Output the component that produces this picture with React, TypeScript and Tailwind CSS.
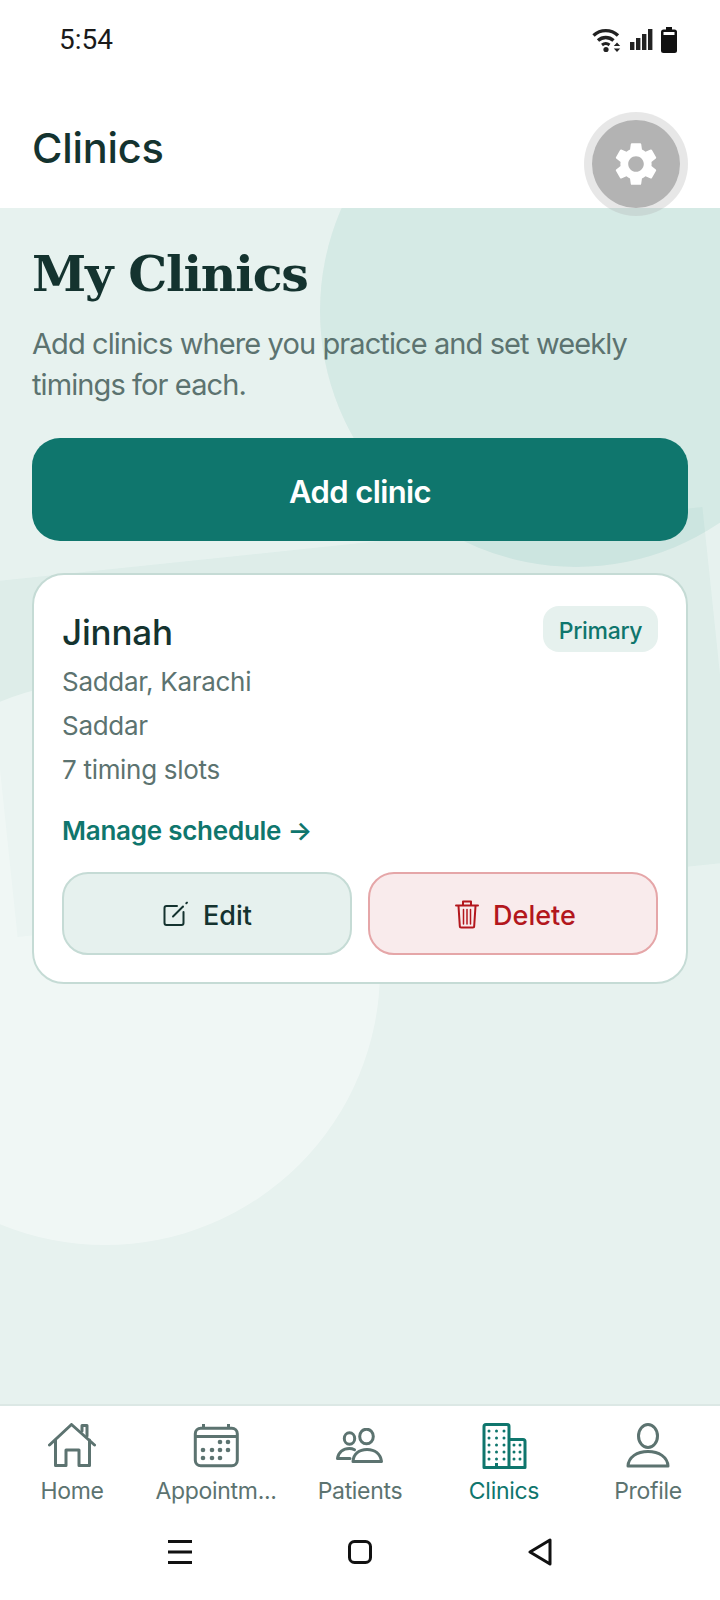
import { MdSettings } from "react-icons/md";

const sans = "font-['Inter','Noto_Sans',sans-serif]";

function WifiIcon() {
  return (
    <svg width="30" height="26" viewBox="0 0 30 26" fill="none" className="text-[#222]">
      <path d="M1.5 8.5C8.5 2 19 2 26 8.5" stroke="currentColor" strokeWidth="3.4" />
      <path d="M6 13.5C10.5 9.5 17 9.5 21.5 13.5" stroke="currentColor" strokeWidth="3.4" />
      <path d="M10 18C12.5 16 15 16 17.5 18" stroke="currentColor" strokeWidth="3" />
      <circle cx="14" cy="22.5" r="2.6" fill="currentColor" />
      <path d="M25 15.5l3.2 3.6h-6.4zM25 25l-3.2-3.6h6.4z" fill="currentColor" />
    </svg>
  );
}

function SignalIcon() {
  return (
    <svg width="23" height="22" viewBox="0 0 23 22" fill="#222">
      <rect x="0" y="13" width="4.4" height="8" />
      <rect x="6" y="9" width="4.4" height="12" />
      <rect x="12" y="5" width="4.4" height="16" />
      <rect x="18" y="0" width="4.4" height="21" />
    </svg>
  );
}

function BatteryIcon() {
  return (
    <svg width="16" height="26" viewBox="0 0 16 26">
      <rect x="5" y="0" width="6" height="3" fill="#111" />
      <rect x="0" y="2.5" width="16" height="23.5" rx="2.5" fill="#111" />
      <rect x="2.5" y="5" width="11" height="3" fill="#fff" />
    </svg>
  );
}

function HomeIcon() {
  return (
    <svg width="48" height="46" viewBox="48 1423 48 46" fill="none" stroke="currentColor" strokeWidth="3" strokeLinejoin="round" strokeLinecap="round">
      <path d="M49.5 1445L71.5 1424.5L94.5 1445" />
      <path d="M55.5 1440V1465.5H66V1450H79V1465.5H89.5V1440" />
      <path d="M82 1431V1425.5H87V1436" />
    </svg>
  );
}

function CalendarIcon() {
  const dots = [
    [220, 1442], [228, 1442],
    [203, 1450], [212, 1450], [220, 1450], [228, 1450],
    [203, 1458], [212, 1458], [220, 1458],
  ];
  return (
    <svg width="46" height="46" viewBox="193 1423 46 46" fill="none" stroke="currentColor" strokeWidth="3">
      <rect x="195.3" y="1428.3" width="42" height="37.5" rx="5.5" />
      <path d="M195.3 1436.5H237.3M203.5 1424V1428M228.5 1424V1428" />
      {dots.map(([x, y]) => (
        <circle key={`${x}-${y}`} cx={x} cy={y} r="2.3" fill="currentColor" stroke="none" />
      ))}
    </svg>
  );
}

function PatientsIcon() {
  return (
    <svg width="48" height="36" viewBox="337 1428 48 36" fill="none" stroke="currentColor" strokeWidth="3" strokeLinejoin="round" strokeLinecap="round">
      <ellipse cx="367.5" cy="1436.5" rx="6.8" ry="7.3" />
      <ellipse cx="350.5" cy="1438.5" rx="5.2" ry="5.8" />
      <path d="M354 1461.5C354.5 1454 360 1449.5 368 1449.5C376 1449.5 381.5 1454 382.5 1461.5Z" />
      <path d="M351 1458.5H338.5C339.5 1452.5 344 1448.5 350.5 1448.5C352.5 1448.5 354 1449 355.5 1449.8" />
    </svg>
  );
}

function ClinicsIcon() {
  const big: number[][] = [];
  for (const y of [1430, 1437, 1444, 1451, 1458]) {
    for (const x of [489, 496.5, 504]) big.push([x, y]);
  }
  const small: number[][] = [];
  for (const y of [1444, 1451, 1458]) {
    for (const x of [514, 520]) small.push([x, y]);
  }
  return (
    <svg width="46" height="48" viewBox="481 1421 46 48" fill="none" stroke="currentColor" strokeWidth="3" strokeLinejoin="round">
      <path d="M509 1466.5H484V1425.5A2 2 0 0 1 486 1423.5H507A2 2 0 0 1 509 1425.5V1466.5Z" />
      <path d="M509 1438.5H523A2 2 0 0 1 525 1440.5V1466.5H509" />
      <path d="M496.5 1466.5V1462" />
      {[...big, ...small].map(([x, y]) => (
        <circle key={`${x}-${y}`} cx={x} cy={y} r="1.5" fill="currentColor" stroke="none" />
      ))}
    </svg>
  );
}

function ProfileIcon() {
  return (
    <svg width="46" height="46" viewBox="624 1423 46 46" fill="none" stroke="currentColor" strokeWidth="3" strokeLinejoin="round">
      <ellipse cx="647" cy="1436" rx="9.5" ry="11.5" />
      <path d="M627 1466C627.5 1457 636 1451.5 647 1451.5C658 1451.5 666.5 1457 667 1466Z" />
    </svg>
  );
}

function EditIcon() {
  return (
    <svg width="28" height="28" viewBox="0 0 28 28" fill="none" stroke="currentColor" strokeWidth="2" strokeLinecap="round" strokeLinejoin="round">
      <path d="M15 6H4.5A2 2 0 0 0 2.5 8V23A2 2 0 0 0 4.5 25H19.5A2 2 0 0 0 21.5 23V12" />
      <path d="M11 16.5L21 6.5" />
      <path d="M24.3 3.3L25 2.6" />
    </svg>
  );
}

function TrashIcon() {
  return (
    <svg width="26" height="30" viewBox="0 0 26 30" fill="none" stroke="currentColor" strokeWidth="2" strokeLinecap="round" strokeLinejoin="round">
      <path d="M2 6.5H24" />
      <path d="M9 6V2.5H17V6" />
      <path d="M4.5 7L5.8 27A1.5 1.5 0 0 0 7.3 28.5H18.7A1.5 1.5 0 0 0 20.2 27L21.5 7" />
      <path d="M9.5 10.5V25M13 10.5V25M16.5 10.5V25" strokeWidth="1.5" />
    </svg>
  );
}

const tabs = [
  { label: "Home", icon: <HomeIcon />, active: false },
  { label: "Appointm...", icon: <CalendarIcon />, active: false },
  { label: "Patients", icon: <PatientsIcon />, active: false },
  { label: "Clinics", icon: <ClinicsIcon />, active: true },
  { label: "Profile", icon: <ProfileIcon />, active: false },
];

export default function App() {
  return (
    <div className={`relative flex h-[1600px] w-[720px] flex-col overflow-hidden bg-white ${sans}`}>
      {/* status bar */}
      <div className="flex h-[78px] items-center justify-between pl-[59px] pr-[43px] pt-[2px]">
        <span className="font-['Roboto',sans-serif] text-[28px] font-normal text-[#1a1a1a]">5:54</span>
        <div className="flex items-center gap-[8px]">
          <WifiIcon />
          <SignalIcon />
          <BatteryIcon />
        </div>
      </div>

      {/* header */}
      <div className="flex h-[130px] items-center px-[32px] pt-[10px]">
        <h1 className="text-[41.5px] font-medium tracking-[-0.2px] text-[#14332f]">Clinics</h1>
      </div>

      {/* settings button with its press ripple */}
      <div className="absolute left-[584px] top-[112px] z-10 flex h-[104px] w-[104px] items-center justify-center rounded-full bg-[#b0b0b0]/30">
        <div className="flex h-[88px] w-[88px] items-center justify-center rounded-full bg-[#b3b3b3]">
          <MdSettings className="h-[52px] w-[52px] text-white" />
        </div>
      </div>

      {/* content */}
      <main className="relative flex-1 overflow-hidden bg-[#e7f2ef] px-[32px]">
        <div className="absolute left-[320px] top-[-153px] h-[512px] w-[512px] rounded-full bg-[#0d8f75]/[0.08]" />
        <div className="absolute left-[-3px] top-[336px] h-[356px] w-[726px] -rotate-6 bg-[#0d8f75]/[0.045]" />
        <div className="absolute left-[-170px] top-[473px] h-[564px] w-[550px] rounded-full bg-white/40" />

        <div className="relative">
          <h2 className="pt-[32px] font-['DejaVu_Serif',serif] text-[49px] font-bold leading-[68px] tracking-[-1.2px] text-[#14332f]">
            My Clinics
          </h2>
          <p className="mt-[15px] text-[29px] leading-[41px] tracking-[-0.9px] text-[#5c7370]">
            Add clinics where you practice and set weekly timings for each.
          </p>

          <button className="mt-[33px] flex h-[103px] w-full items-center justify-center rounded-[28px] bg-[#0f766d] pt-[6px] text-[31px] font-semibold tracking-[-0.6px] text-white">
            Add clinic
          </button>

          <section className="mt-[32px] rounded-[32px] border-2 border-[#c5dbd5] bg-white px-[28px] pb-[27px] pt-[31px]">
            <div className="flex items-start justify-between">
              <h3 className="pt-[3px] text-[35px] font-medium leading-[46px] tracking-[-0.2px] text-[#14332f]">Jinnah</h3>
              <span className="flex h-[46px] w-[115px] items-center justify-center rounded-[16px] bg-[#e6f1ee] pt-[5px] text-[23px] font-medium tracking-[-0.3px] text-[#0f766d]">
                Primary
              </span>
            </div>
            <div className="mt-[5px] flex flex-col text-[26px] leading-[44px] tracking-[-0.3px] text-[#5c7370]">
              <span>Saddar, Karachi</span>
              <span>Saddar</span>
              <span>7 timing slots</span>
            </div>
            <a className="mt-[17px] block text-[26px] font-semibold leading-[44px] tracking-[-0.25px] text-[#0f766d]">
              Manage schedule →
            </a>
            <div className="mt-[19px] grid grid-cols-2 gap-[16px]">
              <button className="flex h-[83px] items-center justify-center gap-[13px] rounded-[26px] border-2 border-[#c5dbd5] bg-[#e6f1ee] text-[27px] font-medium text-[#14332f]">
                <EditIcon />
                <span className="pt-[5px]">Edit</span>
              </button>
              <button className="flex h-[83px] items-center justify-center gap-[13px] rounded-[26px] border-2 border-[#e5a6a8] bg-[#f9ebec] pl-[4px] text-[27px] font-medium text-[#b3171d]">
                <TrashIcon />
                <span className="pt-[5px]">Delete</span>
              </button>
            </div>
          </section>
        </div>
      </main>

      {/* tab bar */}
      <nav className="grid h-[125px] grid-cols-5 border-t-2 border-[#dce8e5] bg-white">
        {tabs.map((tab) => (
          <div
            key={tab.label}
            className={`flex flex-col items-center ${tab.active ? "text-[#0f766d]" : "text-[#5c7370]"}`}
          >
            <div className="flex h-[66px] w-full items-center justify-center pt-[14px]">{tab.icon}</div>
            <span className="mt-[4px] whitespace-nowrap text-center text-[23px] leading-[30px] tracking-[-0.3px]">
              {tab.label}
            </span>
          </div>
        ))}
      </nav>

      {/* android navigation */}
      <div className="flex h-[71px] items-center justify-center gap-[156px] bg-white pb-[26px]">
        <svg width="24" height="24" viewBox="0 0 24 24" fill="#111">
          <rect y="0" width="24" height="3" />
          <rect y="10.5" width="24" height="3" />
          <rect y="21" width="24" height="3" />
        </svg>
        <svg width="24" height="24" viewBox="0 0 24 24" fill="none" stroke="#111" strokeWidth="3">
          <rect x="1.5" y="1.5" width="21" height="21" rx="5" />
        </svg>
        <svg width="24" height="28" viewBox="0 0 24 28" fill="none" stroke="#111" strokeWidth="3" strokeLinejoin="round">
          <path d="M22 2V26L2 14Z" />
        </svg>
      </div>
    </div>
  );
}
